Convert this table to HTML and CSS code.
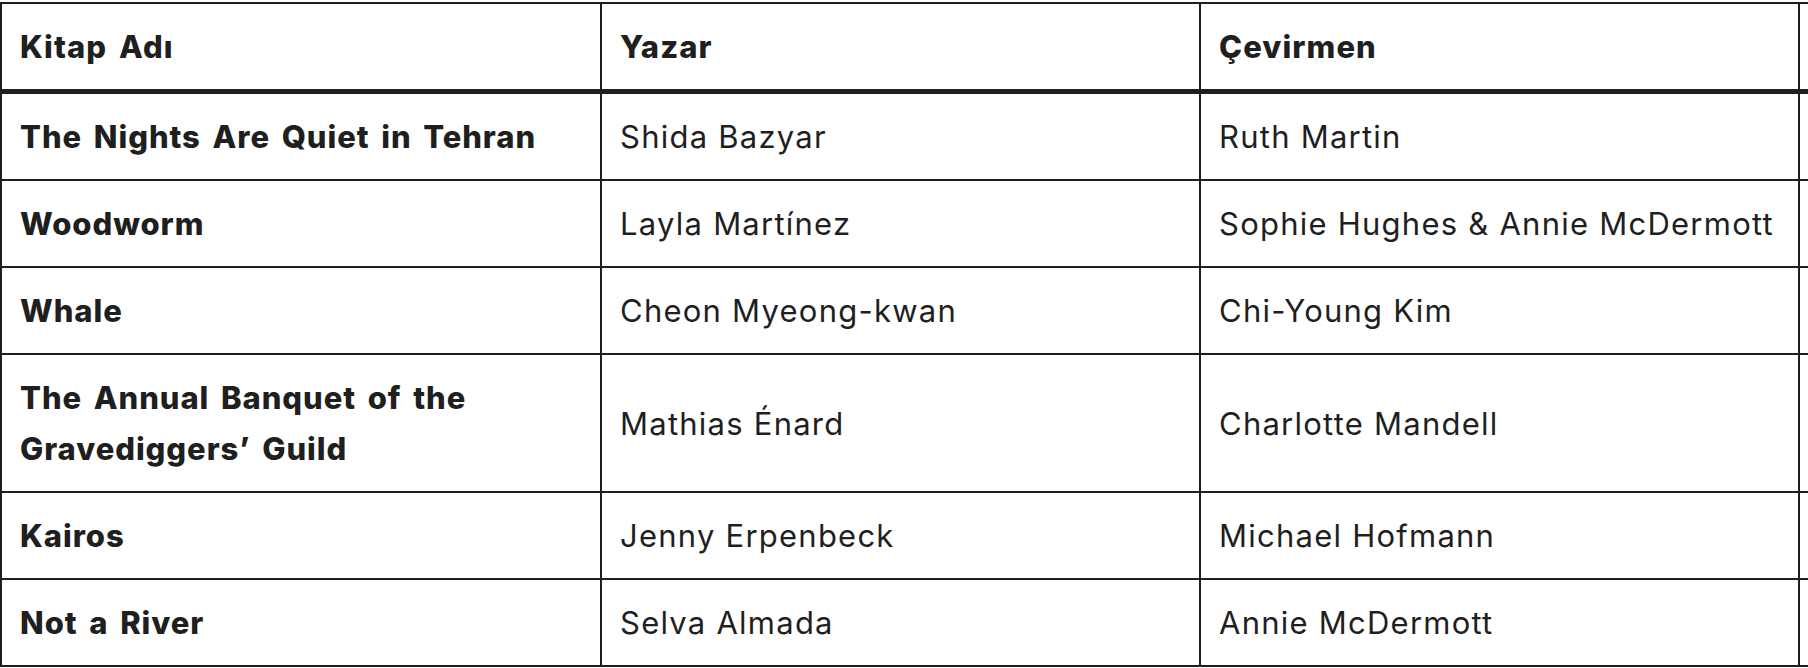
FILE: index.html
```html
<!DOCTYPE html>
<html lang="tr">
<head>
<meta charset="utf-8">
<title>Kitaplar</title>
<link rel="stylesheet" href="styles.css">
</head>
<body>
<div class="table-wrap">
  <table class="books">
    <colgroup>
      <col class="c1"><col class="c2"><col class="c3"><col class="c4">
    </colgroup>
    <thead>
      <tr>
        <th>Kitap Adı</th>
        <th>Yazar</th>
        <th>Çevirmen</th>
        <th></th>
      </tr>
    </thead>
    <tbody>
      <tr><td class="title">The Nights Are Quiet in Tehran</td><td>Shida Bazyar</td><td>Ruth Martin</td><td></td></tr>
      <tr><td class="title">Woodworm</td><td>Layla Martínez</td><td>Sophie Hughes &amp; Annie McDermott</td><td></td></tr>
      <tr><td class="title">Whale</td><td>Cheon Myeong-kwan</td><td>Chi-Young Kim</td><td></td></tr>
      <tr><td class="title">The Annual Banquet of the Gravediggers’ Guild</td><td>Mathias Énard</td><td>Charlotte Mandell</td><td></td></tr>
      <tr><td class="title">Kairos</td><td>Jenny Erpenbeck</td><td>Michael Hofmann</td><td></td></tr>
      <tr><td class="title">Not a River</td><td>Selva Almada</td><td>Annie McDermott</td><td></td></tr>
    </tbody>
  </table>
</div>
</body>
</html>
```

FILE: styles.css
```css
html, body {
  margin: 0;
  padding: 0;
  background: #ffffff;
}

body {
  padding-top: 2px;
  font-family: "Inter", "Roboto", "Liberation Sans", sans-serif;
  color: #1f1f1f;
  overflow: hidden;
}

.table-wrap {
  width: 100%;
  overflow: hidden;
}

.books {
  border-collapse: separate;
  border-spacing: 0;
  table-layout: fixed;
  width: 2400px;
  border-top: 2px solid #1f1f1f;
  border-left: 2px solid #1f1f1f;
}

.books col.c1 { width: 600px; }
.books col.c2 { width: 599px; }
.books col.c3 { width: 599px; }
.books col.c4 { width: 600px; }

.books th,
.books td {
  box-sizing: border-box;
  padding: 17px 18px;
  font-size: 31px;
  line-height: 51px;
  text-align: left;
  vertical-align: middle;
  border-right: 2px solid #1f1f1f;
  border-bottom: 2px solid #1f1f1f;
}

.books th {
  font-weight: 800;
  letter-spacing: 0.035em;
  word-spacing: 4px;
  border-bottom: 5px solid #1f1f1f;
}

.books td {
  font-weight: 400;
  letter-spacing: 0.04em;
}

.books td.title {
  font-weight: 800;
  letter-spacing: 0.03em;
  word-spacing: 4px;
}
```
